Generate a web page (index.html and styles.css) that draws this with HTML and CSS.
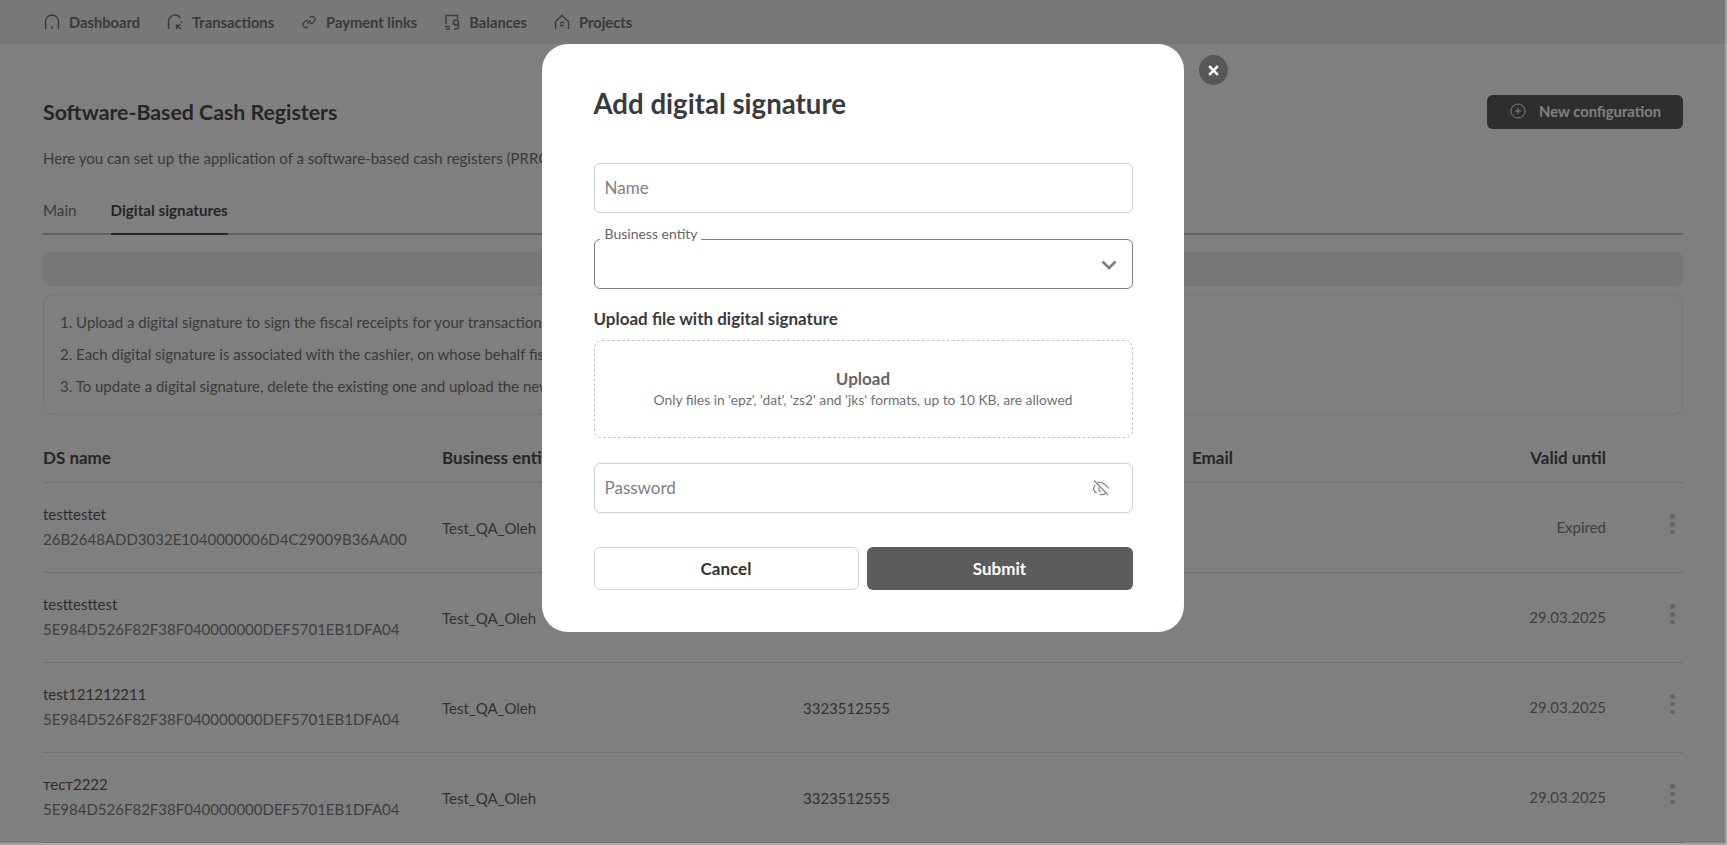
FILE: index.html
```html
<!DOCTYPE html>
<html lang="en">
<head>
<meta charset="utf-8">
<title>Digital signatures</title>
<link rel="stylesheet" href="styles.css">
</head>
<body>
<div class="page">
  <nav class="topnav">
    <a class="nav-item"><svg class="nav-icon" viewBox="0 0 16 16"><path d="M1.500 15V7.500a6.500 6.500 0 0 1 13 0V15"/><path d="M8 12v3"/></svg>Dashboard</a>
    <a class="nav-item"><svg class="nav-icon" viewBox="0 0 16 16"><path d="M1.500 15V7.500a6.500 6.500 0 0 1 12-3.400"/><path d="M14.500 7.500V9"/><path d="M9.500 10.500v4.500M9.500 12.500l4-2M10.500 12.500l3.500 2.500"/></svg>Transactions</a>
    <a class="nav-item"><svg class="nav-icon" viewBox="0 0 16 16"><path d="M6.500 9.500l3-3"/><path d="M9 3.500l.8-.8a3 3 0 0 1 4 4l-2 2a3 3 0 0 1-3 .6"/><path d="M7 12.500l-.8.800a3 3 0 0 1-4-4l2-2a3 3 0 0 1 3-.6"/></svg>Payment links</a>
    <a class="nav-item"><svg class="nav-icon" viewBox="0 0 16 16"><path d="M2 10V1.500h11.500V5"/><path d="M1 12.500h5M2 15h4"/><circle cx="12" cy="8.500" r="2.500"/><path d="M14.500 8.500v4a2.500 2.500 0 0 1-2.500 2.500h-2"/></svg>Balances</a>
    <a class="nav-item"><svg class="nav-icon" viewBox="0 0 16 16"><path d="M1.500 15V7.500L8 1.500l6.500 6V15"/><path d="M6 8.500h4M6 11.500h4"/></svg>Projects</a>
  </nav>

  <main class="content">
    <header class="page-head">
      <h1 class="page-title">Software-Based Cash Registers</h1>
      <button class="primary-btn" type="button"><svg class="plus-icon" viewBox="0 0 16 16"><circle cx="8" cy="8" r="7"/><path d="M8 4.800v6.400M4.800 8h6.400"/></svg>New configuration</button>
    </header>
    <p class="page-desc">Here you can set up the application of a software-based cash registers (PRRO) for fiscal receipts.</p>

    <div class="tabs">
      <span class="tab">Main</span>
      <span class="tab tab-active">Digital signatures</span>
    </div>

    <div class="band"></div>

    <ol class="info">
      <li>1. Upload a digital signature to sign the fiscal receipts for your transactions.</li>
      <li>2. Each digital signature is associated with the cashier, on whose behalf fiscal receipts are issued.</li>
      <li>3. To update a digital signature, delete the existing one and upload the new one.</li>
    </ol>

    <section class="table">
      <div class="row row-head">
        <span>DS name</span><span>Business entity</span><span>Tax ID</span><span>Email</span><span class="cell-end">Valid until</span><span></span>
      </div>
      <div class="row">
        <div class="ds"><span class="ds-name">testtestet</span><span class="ds-key">26B2648ADD3032E1040000006D4C29009B36AA00</span></div>
        <span class="cell-low">Test_QA_Oleh</span><span class="cell-low">3323512555</span><span></span><span class="cell-end cell-muted">Expired</span>
        <div class="dots"><i></i><i></i><i></i></div>
      </div>
      <div class="row">
        <div class="ds"><span class="ds-name">testtesttest</span><span class="ds-key">5E984D526F82F38F040000000DEF5701EB1DFA04</span></div>
        <span class="cell-low">Test_QA_Oleh</span><span class="cell-low">3323512555</span><span></span><span class="cell-end cell-muted">29.03.2025</span>
        <div class="dots"><i></i><i></i><i></i></div>
      </div>
      <div class="row">
        <div class="ds"><span class="ds-name">test121212211</span><span class="ds-key">5E984D526F82F38F040000000DEF5701EB1DFA04</span></div>
        <span class="cell-low">Test_QA_Oleh</span><span class="cell-low">3323512555</span><span></span><span class="cell-end cell-muted">29.03.2025</span>
        <div class="dots"><i></i><i></i><i></i></div>
      </div>
      <div class="row">
        <div class="ds"><span class="ds-name">тест2222</span><span class="ds-key">5E984D526F82F38F040000000DEF5701EB1DFA04</span></div>
        <span class="cell-low">Test_QA_Oleh</span><span class="cell-low">3323512555</span><span></span><span class="cell-end cell-muted">29.03.2025</span>
        <div class="dots"><i></i><i></i><i></i></div>
      </div>
    </section>
  </main>
</div>

<div class="overlay">
  <div class="modal">
    <button class="close" type="button" aria-label="Close"><svg viewBox="0 0 12 12"><path d="M2 2l8 8M10 2l-8 8"/></svg></button>
    <h2 class="modal-title">Add digital signature</h2>
    <div class="field"><span class="placeholder">Name</span></div>
    <div class="field field-select">
      <span class="float-label">Business entity</span>
      <svg class="chevron" viewBox="0 0 16 10"><path d="M1.500 1.500L8 8l6.500-6.500"/></svg>
    </div>
    <h3 class="upload-label">Upload file with digital signature</h3>
    <div class="dropzone">
      <span class="drop-title">Upload</span>
      <span class="drop-note">Only files in 'epz', 'dat', 'zs2' and 'jks' formats, up to 10 KB, are allowed</span>
    </div>
    <div class="field field-password">
      <span class="placeholder">Password</span>
      <svg class="eye" viewBox="0 0 18 18"><path d="M2 1.500L16 16"/><path d="M5.500 3.500C9 2.500 14 5 16.500 9.500"/><path d="M3.200 6C2 7.500 1.500 9 1.500 10C2 11.500 3 13 4.500 14"/><path d="M7.500 15.500C10 16 12 15.500 13.500 14.500"/><path d="M7 8.500A3.800 3.800 0 0 0 9 13"/></svg>
    </div>
    <div class="actions">
      <button class="btn btn-cancel" type="button">Cancel</button>
      <button class="btn btn-submit" type="button">Submit</button>
    </div>
  </div>
</div>
</body>
</html>
```

FILE: styles.css
```css
* { box-sizing: border-box; }
html, body { margin: 0; height: 845px; overflow: hidden; }
body { font-family: Lato, "Noto Sans", sans-serif; background: #fff; color: #4a4a4a; font-size: 15px; }

.page { height: 845px; overflow: hidden; }

.topnav {
  height: 44px; background: #f1f1f1; display: flex; align-items: center; padding-left: 44px; gap: 27px;
}
.nav-item { display: flex; align-items: center; gap: 9px; font-size: 14.700px; font-weight: 700; color: #757575; white-space: nowrap; }
.nav-icon { width: 16px; height: 16px; fill: none; stroke: #757575; stroke-width: 1.400; flex: none; }

.content { padding: 0 44px 0 43px; }

.page-head { height: 51px; margin-top: 51px; display: flex; justify-content: space-between; align-items: flex-start; }
.page-title { margin: 6px 0 0; font-size: 21.300px; line-height: 22px; font-weight: 700; color: #4c4c4c; }
.primary-btn {
  width: 196px; height: 34px; border: 0; border-radius: 6px; background: #5c5c5c; color: #fff; font: 700 14.800px Lato, sans-serif;
  display: flex; align-items: center; padding: 0 0 2px 23px; gap: 13px; white-space: nowrap;
}
.plus-icon { width: 16px; height: 16px; fill: none; stroke: #fff; stroke-width: 1; flex: none; }

.page-desc { margin: 2px 0 0; font-size: 15px; line-height: 20px; color: #757575; }

.tabs { margin-top: 32px; height: 35px; display: flex; gap: 34px; box-shadow: inset 0 -2px 0 #c4c4c4; }
.tab { font-size: 15.200px; line-height: 20px; color: #757575; height: 35px; }
.tab-active { font-weight: 700; color: #4c4c4c; box-shadow: inset 0 -2px 0 #4c4c4c; }

.band { height: 34px; margin-top: 17px; background: #f0f0f0; border-radius: 6px; }

.info { list-style: none; margin: 8px 0 0; height: 121px; padding: 11px 16px 0; border: 1px solid #e8e8e8; border-radius: 10px; font-size: 15px; color: #757575; }
.info li { height: 32px; line-height: 32px; }

.row {
  display: grid; grid-template-columns: 399px 361px 389px 1fr 164px 77px; align-items: center;
  height: 89.900px; border-bottom: 1px solid #e4e4e4; font-size: 15px; color: #666;
}
.row-head { height: 68px; padding-top: 17px; font-size: 17px; font-weight: 700; color: #4c4c4c; }
.cell-end { text-align: right; }
.cell-low { padding-top: 2px; }
.cell-muted { color: #808080; font-size: 15px; }
.ds { display: flex; flex-direction: column; gap: 5px; margin-top: -1px; }
.ds-name { line-height: 20px; color: #5c5c5c; }
.ds-key { line-height: 20px; color: #808080; font-size: 15px; white-space: nowrap; }
.dots { display: flex; flex-direction: column; align-items: center; gap: 3.300px; width: 5px; margin-left: 64px; margin-top: -6px; }
.dots i { width: 4.500px; height: 4.500px; border-radius: 50%; background: #c8c8c8; display: block; }

.overlay {
  position: absolute; inset: 0; background: rgba(0, 0, 0, .5); background-clip: padding-box;
  border-right: 2px solid rgba(0, 0, 0, .35); border-bottom: 2px solid rgba(0, 0, 0, .35);
  display: flex; justify-content: center; align-items: flex-start; padding-top: 44px;
}
.modal { position: relative; width: 642px; height: 588px; background: #fff; border-radius: 26px; padding: 41px 51px 0 52px; color: #333; }
.close {
  position: absolute; left: 657px; top: 11px; width: 29px; height: 30px; padding: 0; border: 0; border-radius: 50%; background: #575757;
  display: flex; align-items: center; justify-content: center;
}
.close svg { width: 13px; height: 13px; fill: none; stroke: #fff; stroke-width: 2.400; }

.modal-title { margin: 0 0 40px; height: 38px; font-size: 27.600px; line-height: 38px; font-weight: 700; color: #3a3a3a; }

.field { position: relative; height: 50px; border: 1px solid #cfcfcf; border-radius: 6px; display: flex; align-items: center; padding: 0 11px 2px 10px; background: #fff; }
.placeholder { font-size: 17px; color: #808080; }
.field-select { margin-top: 26px; border-color: #808080; justify-content: flex-end; padding: 1px 15px 0 0; }
.float-label { position: absolute; left: 5px; top: -15px; padding: 0 3px 0 5px; background: #fff; font-size: 14px; line-height: 17px; color: #666; }
.chevron { width: 16px; height: 10px; fill: none; stroke: #808080; stroke-width: 2.800; }

.upload-label { margin: 18px 0 0; height: 33px; line-height: 24px; font-size: 17px; font-weight: 700; color: #3a3a3a; }
.dropzone {
  height: 98px; border: 1px dashed #c8c8c8; border-radius: 8px; display: flex; flex-direction: column; align-items: center; padding-top: 27px;
}
.drop-title { font-size: 17px; line-height: 22px; font-weight: 700; color: #666; }
.drop-note { font-size: 13.800px; line-height: 20px; color: #707070; }

.field-password { margin-top: 25px; justify-content: space-between; padding: 0 22px 1px 10px; }
.eye { width: 18px; height: 18px; fill: none; stroke: #808080; stroke-width: 1.200; }

.actions { display: flex; gap: 8px; margin-top: 34px; }
.btn { flex: 1; height: 43px; border-radius: 6px; font: 700 17px Lato, sans-serif; padding: 0; }
.btn-cancel { flex: none; width: 265px; background: #fff; border: 1px solid #d4d4d4; color: #333; }
.btn-submit { background: #5c5c5c; border: 0; color: #fff; }
```
